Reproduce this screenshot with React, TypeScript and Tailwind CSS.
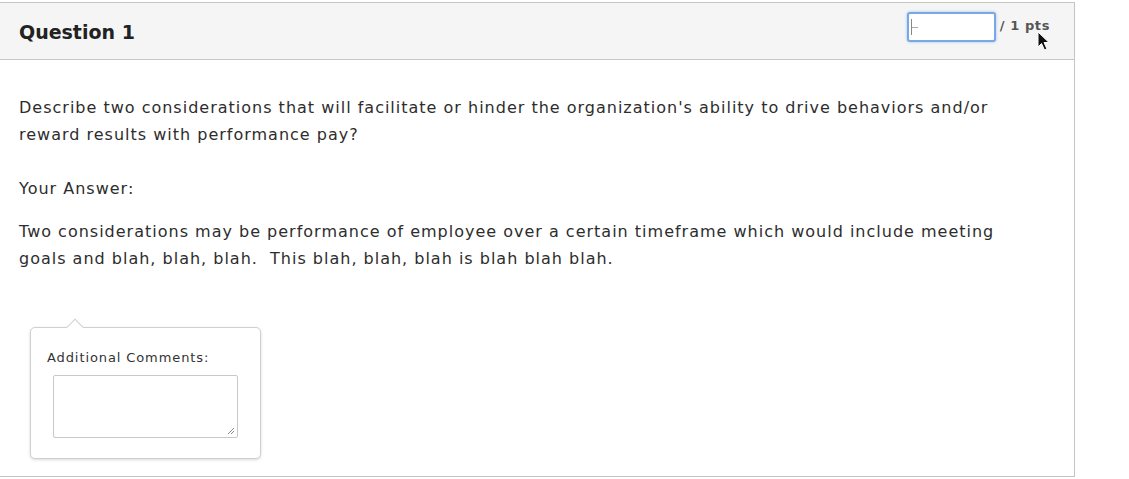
import React from "react";

export default function App() {
  const font = { fontFamily: '"DejaVu Sans", "Liberation Sans", sans-serif' };
  return (
    <div className="w-[1129px] h-[479px] bg-white overflow-hidden relative" style={font}>
      <div className="mt-[2px] ml-[-1px] w-[1076px] h-[475px] border border-[#c4c4c4] bg-white flex flex-col">
        <div className="h-[57px] bg-[#f5f5f5] border-b border-[#c8c8c8] flex items-center justify-between pl-[19px] pr-[24px]">
          <div className="text-[19px] font-bold text-[#222] mt-[2px]">Question 1</div>
          <div className="flex items-start mb-[8px] relative">
            <div className="w-[89px] h-[30px] border-2 border-[#7aa7e6] rounded-[3px] bg-white shadow-[0_0_3px_#9cc0f0] flex items-center pl-[2px]">
              <div className="w-[1px] h-[16px] bg-[#888]" />
              <div className="w-[6px] h-[1px] bg-[#aaa]" />
            </div>
            <div className="ml-[4px] mt-[4px] text-[13px] font-bold text-[#555] tracking-[0.6px]">/ 1 pts</div>
            <svg className="absolute left-[130px] top-[19px]" width="14" height="20" viewBox="0 0 14 20">
              <path d="M1 1 L1 16 L4.5 12.5 L7.5 19 L10 18 L7 11.5 L12 11.5 Z" fill="#111" stroke="#fff" strokeWidth="1" />
            </svg>
          </div>
        </div>
        <div className="pl-[19px] pr-[10px] pt-[34px] text-[16px] leading-[27px] text-[#2d2d2d] tracking-[1px]">
          <p className="whitespace-nowrap">
            Describe two considerations that will facilitate or hinder the organization's ability to drive behaviors and/or
            <br />
            reward results with performance pay?
          </p>
          <p className="mt-[27px]">Your Answer:</p>
          <p className="mt-[16px] whitespace-nowrap">
            Two considerations may be performance of employee over a certain timeframe which would include meeting
            <br />
            goals and blah, blah, blah.&nbsp; This blah, blah, blah is blah blah blah.
          </p>
          <div className="mt-[55px] ml-[11px] relative w-[231px] tracking-normal">
            <div className="absolute left-[39px] top-[-6px] w-[12px] h-[12px] rotate-45 bg-white border-l border-t border-[#d0d0d0]" />
            <div className="w-[231px] h-[132px] rounded-[5px] border border-[#d0d0d0] bg-white shadow-[0_1px_3px_rgba(0,0,0,0.15)] pt-[21px] pl-[16px]">
              <div className="text-[13px] leading-[18px] text-[#333] tracking-[0.9px]">Additional Comments:</div>
              <div className="mt-[8px] ml-[6px] w-[185px] h-[63px] border border-[#c8c8c8] rounded-[2px] bg-white relative">
                <svg className="absolute right-[2px] bottom-[2px]" width="8" height="8" viewBox="0 0 8 8">
                  <path d="M7 1 L1 7 M7 4 L4 7" stroke="#888" strokeWidth="1" />
                </svg>
              </div>
            </div>
          </div>
        </div>
      </div>
    </div>
  );
}
